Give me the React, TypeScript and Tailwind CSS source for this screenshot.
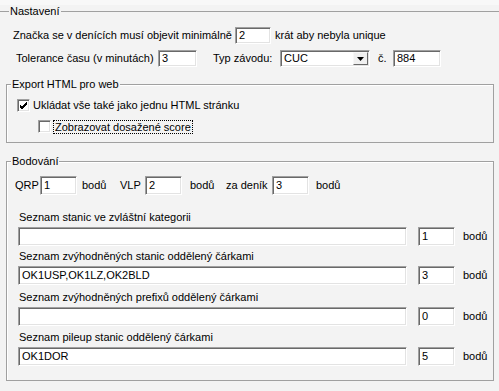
import type { ReactNode } from 'react'

const sunken =
  'bg-white border border-t-[#a0a0a0] border-l-[#a0a0a0] border-r-white border-b-white shadow-[inset_1px_1px_0_#696969,inset_-1px_-1px_0_#e3e3e3]'

function Edit({ className, value }: { className: string; value?: string }) {
  return <div className={`flex items-center pl-[3px] ${sunken} ${className}`}>{value}</div>
}

function Check({ checked }: { checked?: boolean }) {
  return (
    <div className={`w-[13px] h-[13px] shrink-0 flex items-center justify-center ${sunken}`}>
      {checked && (
        <svg width="9" height="9" viewBox="0 0 9 9">
          <path d="M1 4 L3 6 L8 1 M1 5 L3 7 L8 2 M1 6 L3 8 L8 3" stroke="#000" strokeWidth="1" fill="none" />
        </svg>
      )}
    </div>
  )
}

function Legend({ children }: { children: ReactNode }) {
  return <div className="-mt-[7px] ml-[4px] w-fit bg-[#f3f3f3] px-[1px] leading-[13px]">{children}</div>
}

function ListRow({ label, value, points, top }: { label: string; value?: string; points: string; top: string }) {
  return (
    <>
      <div className={`ml-[12px] h-[13px] leading-[13px] ${top}`}>{label}</div>
      <div className="flex items-center pl-[11px] mt-[3px] h-[19px]">
        <Edit className="w-[389px] h-full" value={value} />
        <Edit className="ml-[11px] w-[37px] h-full" value={points} />
        <span className="ml-[8px]">bodů</span>
      </div>
    </>
  )
}

export default function App() {
  return (
    <div className="w-[499px] h-[391px] overflow-hidden bg-[#f3f3f3] text-[11px] leading-[13px] text-black font-['Liberation_Sans',Arial,sans-serif]">
      <div className="h-[5px] bg-[#f8f8f8]" />

      {/* Nastavení */}
      <div className="flex items-center h-[13px]">
        <div className="w-[9px] h-px bg-[#a0a0a0]" />
        <span className="px-[1px]">Nastavení</span>
        <div className="flex-1 h-px bg-[#a0a0a0]" />
      </div>

      <div className="flex items-center h-[17px] mt-[9px] pl-[13px]">
        <span className="w-[222px]">Značka se v denících musí objevit minimálně</span>
        <Edit className="w-[36px] h-full" value="2" />
        <span className="ml-[4px]">krát aby nebyla unique</span>
      </div>

      <div className="flex items-center h-[17px] mt-[6px] pl-[16px]">
        <span className="w-[142px]">Tolerance času (v minutách)</span>
        <Edit className="w-[39px] h-full" value="3" />
        <span className="ml-[16px] w-[67px]">Typ závodu:</span>
        <div className={`w-[90px] h-full flex items-center justify-between pl-[3px] pr-[1px] ${sunken}`}>
          <span>CUC</span>
          <div className="w-[15px] h-[13px] flex items-center justify-center bg-[#f0f0f0] border border-t-[#f8f8f8] border-l-[#f8f8f8] border-r-[#696969] border-b-[#696969]">
            <svg width="7" height="4" viewBox="0 0 7 4">
              <path d="M0 0 H7 L3.5 4 Z" fill="#000" />
            </svg>
          </div>
        </div>
        <span className="ml-[8px] w-[15px]">č.</span>
        <Edit className="w-[48px] h-full" value="884" />
      </div>

      {/* Export HTML */}
      <div className="ml-[6px] mt-[17px] w-[488px] border border-[#a0a0a0] shadow-[inset_1px_1px_0_#ffffff] pb-[9px]">
        <Legend>Export HTML pro web</Legend>
        <div className="flex items-center h-[13px] mt-[8px] pl-[10px]">
          <Check checked />
          <span className="ml-[3px]">Ukládat vše také jako jednu HTML stránku</span>
        </div>
        <div className="flex items-center h-[13px] mt-[8px] pl-[31px]">
          <Check />
          <span className="ml-[2px] px-[1px] border border-dotted border-black leading-[12px]">Zobrazovat dosažené score</span>
        </div>
      </div>

      {/* Bodování */}
      <div className="ml-[6px] mt-[18px] w-[488px] border border-[#a0a0a0] shadow-[inset_1px_1px_0_#ffffff] pb-[14px]">
        <Legend>Bodování</Legend>
        <div className="flex items-center h-[19px] mt-[8px] pl-[8px]">
          <span className="w-[25px]">QRP</span>
          <Edit className="w-[37px] h-full" value="1" />
          <span className="ml-[5px] w-[38px]">bodů</span>
          <span className="w-[25px]">VLP</span>
          <Edit className="w-[37px] h-full" value="2" />
          <span className="ml-[8px] w-[36px]">bodů</span>
          <span className="w-[46px]">za deník</span>
          <Edit className="w-[37px] h-full" value="3" />
          <span className="ml-[7px]">bodů</span>
        </div>
        <ListRow top="mt-[16px]" label="Seznam stanic ve zvláštní kategorii" points="1" />
        <ListRow top="mt-[4px]" label="Seznam zvýhodněných stanic oddělený čárkami" value="OK1USP,OK1LZ,OK2BLD" points="3" />
        <ListRow top="mt-[6px]" label="Seznam zvýhodněných prefixů oddělený čárkami" points="0" />
        <ListRow top="mt-[5px]" label="Seznam pileup stanic oddělený čárkami" value="OK1DOR" points="5" />
      </div>
    </div>
  )
}
